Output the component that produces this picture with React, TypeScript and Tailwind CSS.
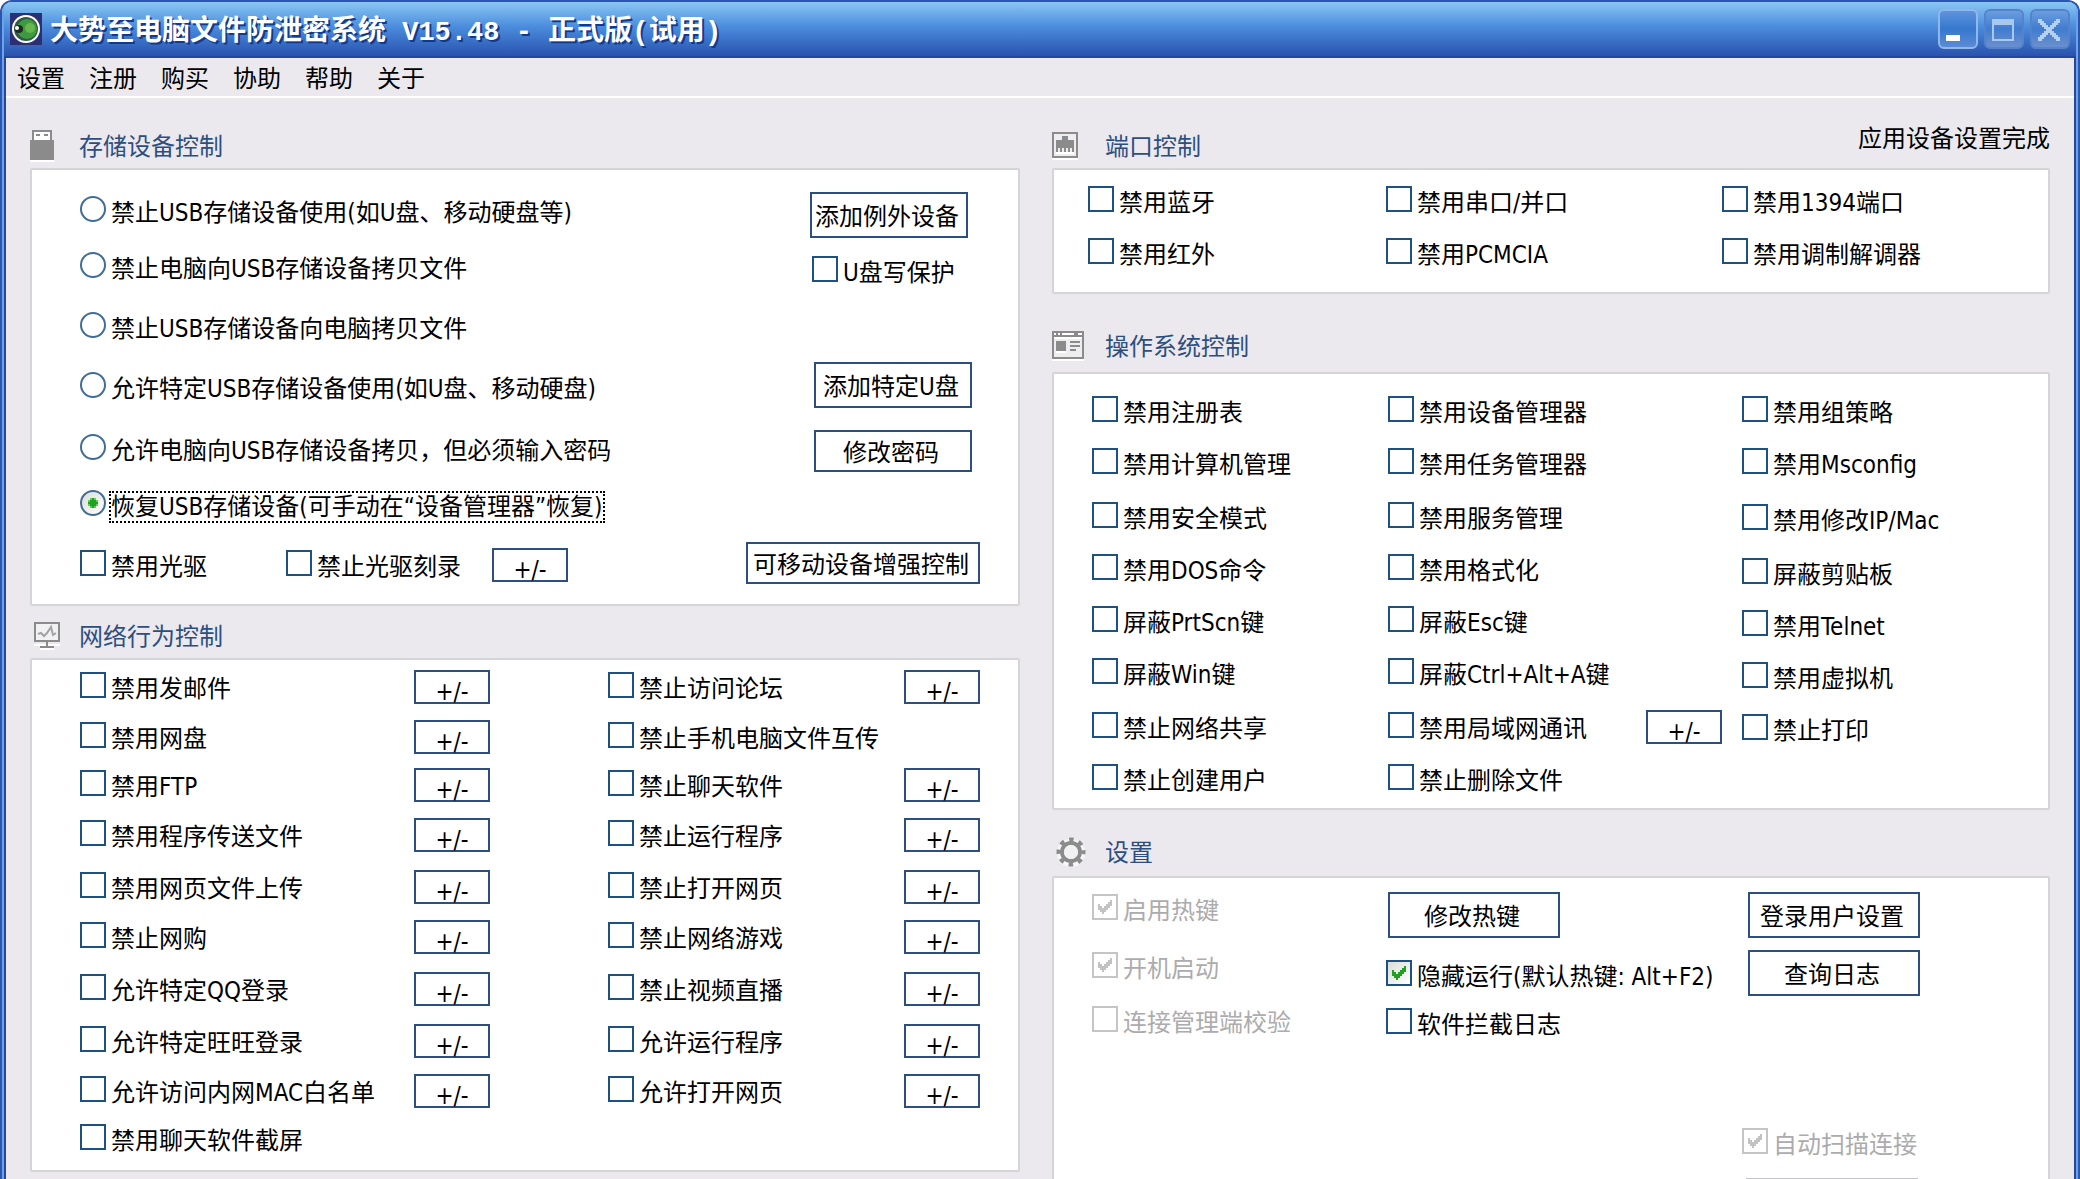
import clsx from "clsx";
import type { ReactNode } from "react";

const MENU = ["设置", "注册", "购买", "协助", "帮助", "关于"];

const STORAGE_MODES = [
  "禁止USB存储设备使用(如U盘、移动硬盘等)",
  "禁止电脑向USB存储设备拷贝文件",
  "禁止USB存储设备向电脑拷贝文件",
  "允许特定USB存储设备使用(如U盘、移动硬盘)",
  "允许电脑向USB存储设备拷贝，但必须输入密码",
  "恢复USB存储设备(可手动在“设备管理器”恢复)",
];
const ACTIVE_MODE = 5;

type Rule = { label: string; edit?: boolean };

const NETWORK_LEFT: Rule[] = [
  { label: "禁用发邮件", edit: true },
  { label: "禁用网盘", edit: true },
  { label: "禁用FTP", edit: true },
  { label: "禁用程序传送文件", edit: true },
  { label: "禁用网页文件上传", edit: true },
  { label: "禁止网购", edit: true },
  { label: "允许特定QQ登录", edit: true },
  { label: "允许特定旺旺登录", edit: true },
  { label: "允许访问内网MAC白名单", edit: true },
  { label: "禁用聊天软件截屏" },
];

const NETWORK_RIGHT: Rule[] = [
  { label: "禁止访问论坛", edit: true },
  { label: "禁止手机电脑文件互传" },
  { label: "禁止聊天软件", edit: true },
  { label: "禁止运行程序", edit: true },
  { label: "禁止打开网页", edit: true },
  { label: "禁止网络游戏", edit: true },
  { label: "禁止视频直播", edit: true },
  { label: "允许运行程序", edit: true },
  { label: "允许打开网页", edit: true },
];

const PORTS = ["禁用蓝牙", "禁用串口/并口", "禁用1394端口", "禁用红外", "禁用PCMCIA", "禁用调制解调器"];

const SYSTEM_A = [
  "禁用注册表",
  "禁用计算机管理",
  "禁用安全模式",
  "禁用DOS命令",
  "屏蔽PrtScn键",
  "屏蔽Win键",
  "禁止网络共享",
  "禁止创建用户",
];
const SYSTEM_B: Rule[] = [
  { label: "禁用设备管理器" },
  { label: "禁用任务管理器" },
  { label: "禁用服务管理" },
  { label: "禁用格式化" },
  { label: "屏蔽Esc键" },
  { label: "屏蔽Ctrl+Alt+A键" },
  { label: "禁用局域网通讯", edit: true },
  { label: "禁止删除文件" },
];
const SYSTEM_C = [
  "禁用组策略",
  "禁用Msconfig",
  "禁用修改IP/Mac",
  "屏蔽剪贴板",
  "禁用Telnet",
  "禁用虚拟机",
  "禁止打印",
];

function Check({ label, checked, disabled }: { label: string; checked?: boolean; disabled?: boolean }) {
  return (
    <label
      className={clsx(
        "flex h-[26px] w-fit items-center gap-[5px] whitespace-nowrap",
        disabled ? "text-[#acabae]" : "text-black",
      )}
    >
      <span className="relative size-[26px] shrink-0">
        <input
          type="checkbox"
          defaultChecked={checked}
          disabled={disabled}
          className="peer block size-[26px] appearance-none border-2 border-[#1c5180] bg-white checked:bg-linear-to-br checked:from-[#dcdcd7] checked:to-white disabled:border-[#c5c5c8] disabled:from-white"
        />
        <svg
          viewBox="0 0 13 13"
          shapeRendering="crispEdges"
          className={clsx(
            "pointer-events-none absolute inset-0 hidden size-[26px] peer-checked:block",
            disabled ? "fill-[#c2c2c5]" : "fill-[#21a121]",
          )}
        >
          <path d="M3 5h1v1h1v1h1v-1h1v-1h1v-1h1v-1h1v3h-1v1h-1v1h-1v1h-1v1h-1v-1h-1v-1h-1z" />
        </svg>
      </span>
      <span className="mt-2 leading-7">{label}</span>
    </label>
  );
}

function Mode({ label, active }: { label: string; active: boolean }) {
  return (
    <label className="flex h-[26px] w-fit items-center gap-[5px] whitespace-nowrap">
      <span className="relative size-[26px] shrink-0">
        <input
          type="radio"
          name="storage-mode"
          defaultChecked={active}
          className="peer block size-[26px] appearance-none rounded-full border-2 border-[#3f6d97] bg-white checked:bg-linear-to-br checked:from-[#dcdcd7] checked:to-white"
        />
        <svg
          viewBox="0 0 13 13"
          shapeRendering="crispEdges"
          className="pointer-events-none absolute inset-0 hidden size-[26px] peer-checked:block"
        >
          <path fill="#5dcf5d" d="M5 4h3v1h1v3h-1v1h-3v-1h-1v-3h1z" />
          <path fill="#21a121" d="M6 4h1v1h1v1h1v1h-1v1h-1v1h-1v-1h-1v-1h-1v-1h1v-1h1z" />
        </svg>
      </span>
      <span className={clsx("mt-2 leading-7", active && "outline-2 outline-dotted outline-black")}>{label}</span>
    </label>
  );
}

function Button({ children, className }: { children: ReactNode; className?: string }) {
  return (
    <button
      type="button"
      className={clsx("border-2 border-[#2d4f80] bg-white pt-1 pr-1 whitespace-nowrap text-black", className)}
    >
      {children}
    </button>
  );
}

function EditButton() {
  return (
    <button type="button" className="h-[34px] w-[76px] border-2 border-[#2d4f80] bg-white pt-2 leading-6">
      +/-
    </button>
  );
}

function Section({
  title,
  icon,
  status,
  headClass,
  titleClass,
  className,
  children,
}: {
  title: string;
  icon: ReactNode;
  status?: string;
  headClass: string;
  titleClass: string;
  className?: string;
  children: ReactNode;
}) {
  return (
    <section className={clsx("flex flex-col", className)}>
      <header className={clsx("flex items-center", headClass)}>
        <span className={clsx("shrink-0", titleClass)}>{icon}</span>
        <h2 className="pt-0.5 pl-px leading-7 text-[#2d4f80]">{title}</h2>
        {status && <p className="ml-auto self-start pt-px leading-7 text-black">{status}</p>}
      </header>
      <div className="grow rounded-xs border-2 border-[#d5d4d8] bg-white">{children}</div>
    </section>
  );
}

function AppIcon() {
  return (
    <svg viewBox="0 0 32 32" className="size-8">
      <rect width="32" height="32" fill="#2b2f74" />
      <ellipse cx="16" cy="16" rx="14" ry="14" fill="#fff" />
      <circle cx="16" cy="16" r="12" fill="#2c5a48" />
      <circle cx="17" cy="16" r="10" fill="#3f9a3f" />
      <circle cx="20" cy="15" r="5" fill="#66b84e" />
      <circle cx="9" cy="16" r="4" fill="#1b2b22" />
      <circle cx="7" cy="15" r="2" fill="#fff" />
    </svg>
  );
}

function UsbIcon() {
  return (
    <svg viewBox="0 0 12 16" shapeRendering="crispEdges" className="h-8 w-6">
      <path fill="#fff" d="M0 15h12v1h-12z" />
      <path fill="#8b8b8b" d="M1 0h10v5h1v10h-12v-10h1z" />
      <path fill="#fff" d="M2 1h8v4h-8z" />
      <path fill="#8b8b8b" d="M3 2h2v1h-2zM7 2h2v1h-2z" />
    </svg>
  );
}

function MonitorIcon() {
  return (
    <svg viewBox="0 0 13 14" shapeRendering="crispEdges" className="ml-1 h-7 w-[26px]">
      <path fill="#fff" d="M0 11h13v1h-13zM3 13h7v1h-7z" />
      <path fill="#8b8b8b" d="M0 0h13v10h-6v2h3v1h-7v-1h3v-2h-6z" />
      <path fill="#f1f0f3" d="M1 1h11v8h-11z" />
      <path
        fill="none"
        stroke="#a3a3a5"
        shapeRendering="auto"
        d="M2 6l1.500-.5 1.500 1.500 1.500-1.500 2-3 1 4 1.500-1"
      />
    </svg>
  );
}

function PortIcon() {
  return (
    <svg viewBox="0 0 13 14" shapeRendering="crispEdges" className="h-7 w-[26px]">
      <path fill="#fff" d="M0 13h13v1h-13z" />
      <path fill="#8b8b8b" d="M0 0h13v13h-13z" />
      <path fill="#eeedf0" d="M1 1h11v11h-11z" />
      <path fill="#8b8b8b" d="M5 2h3v2h3v6h-1v-2h-1v2h-1v-2h-1v2h-1v-2h-1v2h-1v-2h-1v2h-1v-6h3z" />
      <path fill="#fff" d="M2 10h9v1h-9z" />
    </svg>
  );
}

function SystemIcon() {
  return (
    <svg viewBox="0 0 16 15" shapeRendering="crispEdges" className="h-[30px] w-8">
      <path fill="#fff" d="M0 14h16v1h-16z" />
      <path fill="#8b8b8b" d="M0 0h16v14h-16z" />
      <path fill="#fff" d="M1 1h1v1h-1zM3 1h1v1h-1zM5 1h6v1h-6zM13 1h2v1h-2zM1 3h14v1h-14z" />
      <path fill="#eeedf0" d="M1 4h14v9h-14z" />
      <path fill="#fff" d="M2 10h5v1h-5z" />
      <path fill="#8b8b8b" d="M2 5h5v5h-5zM9 5h5v1h-5zM9 7h5v1h-5zM9 9h3v1h-3z" />
    </svg>
  );
}

function GearIcon() {
  return (
    <svg viewBox="0 0 30 30" className="ml-1 size-[30px]">
      <circle cx="15" cy="16" r="14" fill="#f7f6f8" />
      <g fill="none" stroke="#8b8b8b">
        <circle cx="15" cy="15" r="9" strokeWidth="4" />
        <circle cx="15" cy="15" r="12.500" strokeWidth="4" strokeDasharray="4.500 5.318" strokeDashoffset="2.250" />
      </g>
      <circle cx="15" cy="15" r="7" fill="#f1f0f3" />
    </svg>
  );
}

function WindowButton({ label, primary, children }: { label: string; primary?: boolean; children: ReactNode }) {
  return (
    <button
      type="button"
      aria-label={label}
      className={clsx(
        "size-10 rounded-md border-2 bg-linear-to-b",
        primary
          ? "border-[#8fb9ee] from-[#5f93dc] via-[#3478cf] to-[#5b8bd4]"
          : "border-[#5583cb] from-[#6a9de0] via-[#3f7ccf] to-[#6b8fce]",
      )}
    >
      <svg viewBox="0 0 18 18" shapeRendering="crispEdges" className="size-9">
        {children}
      </svg>
    </button>
  );
}

function TitleBar() {
  return (
    <header className="flex h-14 items-center border-b-2 border-[#25479a] bg-linear-to-b from-[#8ac6f3] from-0% via-[#4b8cdc] via-46% to-[#2a52ae] pr-1.5 pl-1.5">
      <AppIcon />
      <h1 className="ml-2 flex items-center pt-2 font-['Liberation_Mono','Noto_Sans_CJK_SC',monospace] text-[28px] leading-8 font-bold whitespace-pre text-white [text-shadow:2px_2px_0_#123a8c]">
        大势至电脑文件防泄密系统
        <span className="text-[27px]"> V15.48 - </span>
        正式版(试用)
      </h1>
      <div className="ml-auto flex gap-1.5">
        <WindowButton label="最小化" primary>
          <path fill="#fff" d="M3 12h7v3h-7z" />
        </WindowButton>
        <WindowButton label="最大化">
          <path fill="#a9c8f0" d="M3 4h11v11h-11zM4 7v7h9v-7z" fillRule="evenodd" />
        </WindowButton>
        <WindowButton label="关闭">
          <path
            fill="#b6d0f2"
            d="M3 4h2v1h1v1h1v1h1v1h1v-1h1v-1h1v-1h1v-1h2v2h-1v1h-1v1h-1v1h-1v1h1v1h1v1h1v1h1v2h-2v-1h-1v-1h-1v-1h-1v-1h-1v1h-1v1h-1v1h-1v1h-2v-2h1v-1h1v-1h1v-1h1v-1h-1v-1h-1v-1h-1v-1h-1z"
          />
        </WindowButton>
      </div>
    </header>
  );
}

function StorageSection() {
  return (
    <Section title="存储设备控制" icon={<UsbIcon />} headClass="h-11" titleClass="w-12">
      <div className="flex justify-between pr-[38px] pl-12">
        <div className="grid grid-rows-[56px_60px_60px_62px_56px_58px_34px] pt-[26px] pb-[22px]">
          {STORAGE_MODES.map((mode, i) => (
            <Mode key={mode} label={mode} active={i === ACTIVE_MODE} />
          ))}
          <div className="grid grid-cols-[206px_206px_76px]">
            <div className="pt-0.5">
              <Check label="禁用光驱" />
            </div>
            <div className="pt-0.5">
              <Check label="禁止光驱刻录" />
            </div>
            <EditButton />
          </div>
        </div>
        <div className="flex flex-col pt-[22px]">
          <div className="ml-16 flex flex-col items-start gap-[18px]">
            <Button className="h-[46px] w-[158px]">添加例外设备</Button>
            <div className="pl-0.5">
              <Check label="U盘写保护" />
            </div>
          </div>
          <div className="mt-20 ml-[68px] flex flex-col items-start gap-[22px]">
            <Button className="h-[46px] w-[158px]">添加特定U盘</Button>
            <Button className="h-[42px] w-[158px]">修改密码</Button>
          </div>
          <Button className="mt-[70px] h-[42px] w-[234px]">可移动设备增强控制</Button>
        </div>
      </div>
    </Section>
  );
}

function NetworkSection() {
  return (
    <Section title="网络行为控制" icon={<MonitorIcon />} headClass="h-11" titleClass="w-12" className="mt-2">
      <div className="grid grid-cols-[334fr_194fr_296fr_76px] grid-rows-[50px_48px_50px_52px_50px_52px_52px_50px_48px_48px] pt-2.5 pr-[38px] pl-12">
        {NETWORK_LEFT.map((rule, i) => {
          const other = NETWORK_RIGHT[i];
          return (
            <div key={rule.label} className="contents">
              <div className="pt-0.5">
                <Check label={rule.label} />
              </div>
              <div>{rule.edit && <EditButton />}</div>
              <div className="pt-0.5">{other && <Check label={other.label} />}</div>
              <div>{other?.edit && <EditButton />}</div>
            </div>
          );
        })}
      </div>
    </Section>
  );
}

function SystemSection() {
  return (
    <Section title="操作系统控制" icon={<SystemIcon />} headClass="h-[52px]" titleClass="w-[52px]" className="mt-[26px]">
      <div className="grid grid-cols-[296fr_354fr_306fr] pt-[22px] pb-[18px] pl-[38px]">
        <div className="grid grid-rows-[52px_54px_52px_52px_52px_54px_52px_26px]">
          {SYSTEM_A.map((label) => (
            <Check key={label} label={label} />
          ))}
        </div>
        <div className="grid grid-rows-[52px_54px_52px_52px_52px_54px_52px_26px]">
          {SYSTEM_B.map((rule) => (
            <div key={rule.label} className="flex justify-between pr-5">
              <Check label={rule.label} />
              {rule.edit && (
                <div className="-mt-0.5">
                  <EditButton />
                </div>
              )}
            </div>
          ))}
        </div>
        <div className="grid grid-rows-[52px_56px_54px_52px_52px_52px_26px] content-start">
          {SYSTEM_C.map((label) => (
            <Check key={label} label={label} />
          ))}
        </div>
      </div>
    </Section>
  );
}

function SettingsSection() {
  return (
    <Section title="设置" icon={<GearIcon />} headClass="h-12" titleClass="w-[52px]" className="mt-[18px] grow">
      <div className="grid grid-cols-[294fr_356fr_306fr] pl-[38px]">
        <div className="grid grid-rows-[58px_54px_26px] content-start pt-4">
          <Check label="启用热键" checked disabled />
          <Check label="开机启动" checked disabled />
          <Check label="连接管理端校验" disabled />
        </div>
        <div className="flex flex-col items-start gap-[22px] pt-3.5">
          <Button className="ml-0.5 h-[46px] w-[172px]">修改热键</Button>
          <Check label="隐藏运行(默认热键: Alt+F2)" checked />
          <Check label="软件拦截日志" />
        </div>
        <div className="flex flex-col pt-3.5">
          <div className="flex flex-col gap-3 pl-1.5">
            <Button className="h-[46px] w-[172px]">登录用户设置</Button>
            <Button className="h-[46px] w-[172px]">查询日志</Button>
          </div>
          <div className="mt-[132px]">
            <Check label="自动扫描连接" checked disabled />
          </div>
          <button type="button" disabled className="mt-6 ml-1 h-[42px] w-[172px] border-2 border-[#c5c5c8] bg-white" />
        </div>
      </div>
    </Section>
  );
}

export default function App() {
  return (
    <div className="h-screen overflow-hidden bg-white font-['DejaVu_Sans_Condensed','Noto_Sans_CJK_SC',sans-serif] text-2xl text-black">
      <div className="min-h-full overflow-hidden rounded-t-xl border-x-2 border-t-2 border-[#2a55b0]">
        <div className="rounded-t-lg border-x-2 border-[#6ea3e8] bg-[#6ea3e8]">
          <TitleBar />
          <div className="border-x-2 border-[#25479a] bg-[#ebe9ed]">
            <nav className="flex h-10 items-center gap-6 border-b-2 border-white pt-1 pl-[11px]">
              {MENU.map((item) => (
                <button key={item} type="button" className="leading-7">
                  {item}
                </button>
              ))}
            </nav>
            <main className="grid min-h-[calc(100vh-98px)] grid-cols-[990fr_998fr] gap-x-8 px-6 pt-[26px]">
              <div>
                <StorageSection />
                <NetworkSection />
              </div>
              <div className="flex flex-col">
                <Section
                  title="端口控制"
                  icon={<PortIcon />}
                  status="应用设备设置完成"
                  headClass="h-11"
                  titleClass="w-[52px]"
                >
                  <div className="grid grid-cols-[298fr_336fr_326fr] gap-y-[26px] pt-4 pb-7 pl-[34px]">
                    {PORTS.map((label) => (
                      <Check key={label} label={label} />
                    ))}
                  </div>
                </Section>
                <SystemSection />
                <SettingsSection />
              </div>
            </main>
          </div>
        </div>
      </div>
    </div>
  );
}
